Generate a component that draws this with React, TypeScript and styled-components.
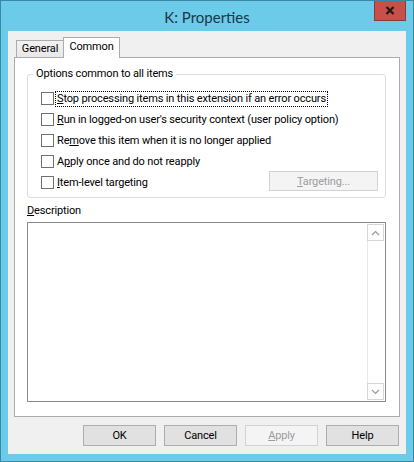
import React from "react";
import styled, { createGlobalStyle } from "styled-components";

const GlobalStyle = createGlobalStyle`
  html, body {
    margin: 0;
    padding: 0;
  }
  body {
    font-family: Roboto, "Noto Sans", sans-serif;
    font-size: 11px;
    letter-spacing: -0.15px;
    color: #000;
  }
  * {
    box-sizing: border-box;
  }
`;

const Window = styled.div`
  width: 414px;
  height: 462px;
  border: 1px solid #3a87a6;
  background: #6ccbe9;
  display: flex;
  flex-direction: column;
`;

const TitleBar = styled.div`
  height: 30px;
  display: grid;
  grid-template-columns: 1fr auto 1fr;
  align-items: center;
`;

const Title = styled.div`
  grid-column: 2;
  font-family: Lato, "Noto Sans", sans-serif;
  font-size: 15px;
  letter-spacing: 0;
  color: #1b3646;
  padding-top: 1px;
`;

const CloseButton = styled.div`
  grid-column: 3;
  justify-self: end;
  align-self: start;
  width: 32px;
  height: 20px;
  margin-right: 7px;
  background: #c7504b;
  border: 1px solid #8c3a36;
  border-top: none;
  display: flex;
  align-items: center;
  justify-content: center;
`;

const Client = styled.div`
  flex: 1;
  margin: 0 7px 7px;
  background: #f0f0f0;
  padding: 6px 6px 0;
  display: flex;
  flex-direction: column;
`;

const TabStrip = styled.div`
  height: 20px;
  display: flex;
  align-items: flex-end;
  padding-left: 2px;
`;

const Tab = styled.div<{ $active?: boolean }>`
  position: relative;
  height: ${(p) => (p.$active ? "21px" : "17px")};
  width: ${(p) => (p.$active ? "57px" : "48px")};
  margin-bottom: ${(p) => (p.$active ? "-1px" : "0")};
  margin-left: ${(p) => (p.$active ? "-1px" : "0")};
  z-index: ${(p) => (p.$active ? 1 : 0)};
  padding-top: ${(p) => (p.$active ? "2px" : "1px")};
  text-align: center;
  background: ${(p) => (p.$active ? "#fff" : "linear-gradient(#f2f2f2, #e8e8e8)")};
  border: 1px solid #acacac;
  border-bottom: none;
  line-height: 14px;
`;

const Pane = styled.div`
  height: 360px;
  background: #fff;
  border: 1px solid #acacac;
  padding: 0 13px 0 12px;
  display: flex;
  flex-direction: column;
`;

const Group = styled.fieldset`
  margin: 8px 0 0;
  padding: 0 0 4px 13px;
  border: 1px solid #dcdcdc;
  border-radius: 3px;
  min-width: 0;
`;

const Legend = styled.legend`
  margin-left: -8px;
  padding: 0 3px;
  line-height: 16px;
`;

const OptionList = styled.div`
  padding-top: 6px;
`;

const OptionRow = styled.div`
  height: 21px;
  display: flex;
  align-items: center;
  padding-right: 7px;
`;

const Check = styled.span`
  width: 13px;
  height: 13px;
  border: 1px solid #707070;
  background: #fff;
  flex: none;
`;

const OptionLabel = styled.span<{ $focused?: boolean }>`
  margin-left: 2px;
  padding: 0 1px;
  line-height: 14px;
  outline: ${(p) => (p.$focused ? "1px dotted #000" : "none")};
  white-space: nowrap;
`;

const Spacer = styled.div`
  flex: 1;
`;

const Button = styled.div<{ $disabled?: boolean }>`
  width: 73px;
  height: 21px;
  display: flex;
  align-items: center;
  justify-content: center;
  background: ${(p) => (p.$disabled ? "#f4f4f4" : "#e1e1e1")};
  border: 1px solid ${(p) => (p.$disabled ? "#d2d2d2" : "#adadad")};
  color: ${(p) => (p.$disabled ? "#9c9c9c" : "#000")};
`;

const TargetButton = styled(Button)`
  width: 109px;
  height: 20px;
  margin-top: -3px;
`;

const DescLabel = styled.div`
  margin-top: 5px;
  line-height: 16px;
`;

const TextBox = styled.div`
  margin-top: 3px;
  height: 180px;
  border: 1px solid #8a8a8a;
  display: flex;
  justify-content: flex-end;
  padding: 1px;
`;

const ScrollBar = styled.div`
  width: 17px;
  display: flex;
  flex-direction: column;
  justify-content: space-between;
  border-left: 1px solid #eaeaea;
`;

const ScrollButton = styled.div`
  height: 17px;
  border: 1px solid #d6d6d6;
  margin-left: -1px;
  display: flex;
  align-items: center;
  justify-content: center;
  background: #fff;
`;

const Footer = styled.div`
  display: flex;
  justify-content: flex-end;
  gap: 8px;
  margin-top: 8px;
  padding-right: 1px;
`;

const Chevron = ({ up }: { up?: boolean }) => (
  <svg width="9" height="6" viewBox="0 0 9 6">
    <path
      d={up ? "M1 5 L4.5 1.5 L8 5" : "M1 1 L4.5 4.5 L8 1"}
      fill="none"
      stroke="#9a9a9a"
      strokeWidth="1.2"
    />
  </svg>
);

const options = [
  { pre: "", key: "S", post: "top processing items in this extension if an error occurs" },
  { pre: "", key: "R", post: "un in logged-on user's security context (user policy option)" },
  { pre: "Re", key: "m", post: "ove this item when it is no longer applied" },
  { pre: "A", key: "p", post: "ply once and do not reapply" },
  { pre: "", key: "I", post: "tem-level targeting" },
];

export default function App() {
  return (
    <>
      <GlobalStyle />
      <Window>
        <TitleBar>
          <Title>K: Properties</Title>
          <CloseButton>
            <svg width="10" height="9" viewBox="0 0 10 9">
              <path d="M1.5 1 L8.5 8 M8.5 1 L1.5 8" stroke="#2a1614" strokeWidth="2.3" />
            </svg>
          </CloseButton>
        </TitleBar>
        <Client>
          <TabStrip>
            <Tab>General</Tab>
            <Tab $active>Common</Tab>
          </TabStrip>
          <Pane>
            <Group>
              <Legend>Options common to all items</Legend>
              <OptionList>
                {options.map((o, i) => (
                  <OptionRow key={i}>
                    <Check />
                    <OptionLabel $focused={i === 0}>
                      {o.pre}
                      <u>{o.key}</u>
                      {o.post}
                    </OptionLabel>
                    {i === 4 && (
                      <>
                        <Spacer />
                        <TargetButton $disabled>
                          <span>
                            <u>T</u>argeting...
                          </span>
                        </TargetButton>
                      </>
                    )}
                  </OptionRow>
                ))}
              </OptionList>
            </Group>
            <DescLabel>
              <u>D</u>escription
            </DescLabel>
            <TextBox>
              <ScrollBar>
                <ScrollButton>
                  <Chevron up />
                </ScrollButton>
                <ScrollButton>
                  <Chevron />
                </ScrollButton>
              </ScrollBar>
            </TextBox>
          </Pane>
          <Footer>
            <Button>OK</Button>
            <Button>Cancel</Button>
            <Button $disabled>
              <span>
                <u>A</u>pply
              </span>
            </Button>
            <Button>Help</Button>
          </Footer>
        </Client>
      </Window>
    </>
  );
}
